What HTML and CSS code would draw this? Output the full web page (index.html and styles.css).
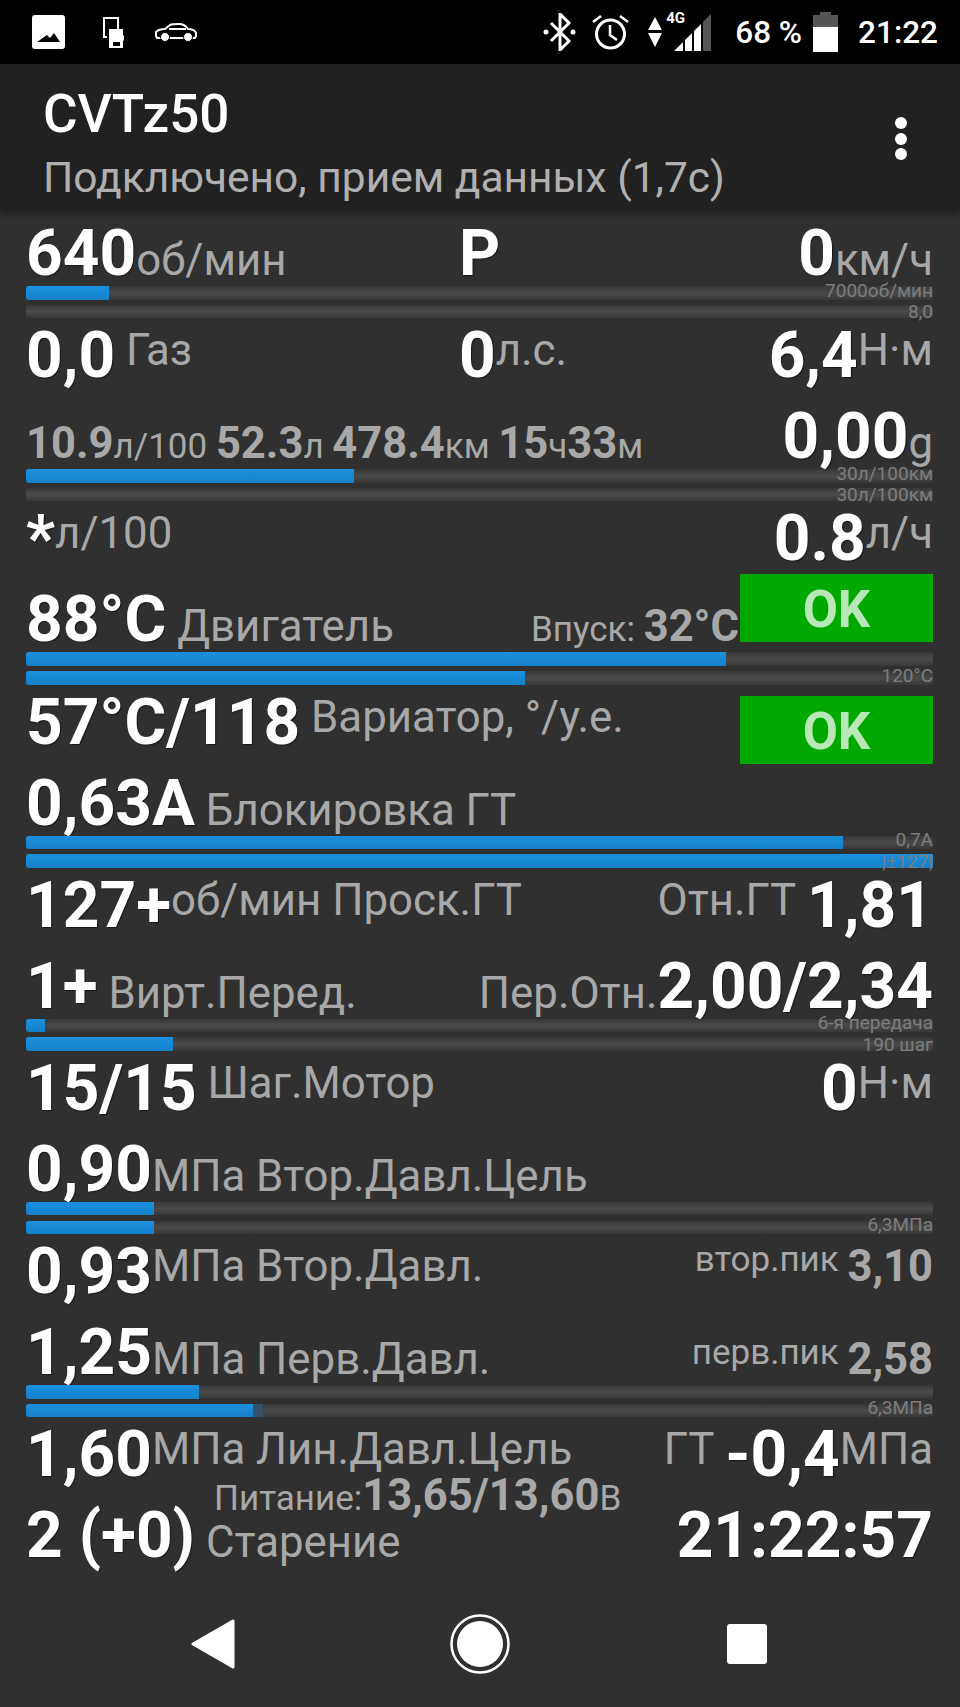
FILE: index.html
```html
<!DOCTYPE html>
<html lang="ru">
<head>
  <meta charset="UTF-8" />
  <title>CVTz50</title>
  <link rel="stylesheet" href="styles.css">
</head>
<body>

  <!-- status bar -->
  <div class="statusbar">
    <div class="status-left">
      <svg width="33" height="34" viewBox="0 0 33 34"><path fill="#fff" fill-rule="evenodd" d="M3 0h27a3 3 0 0 1 3 3v28a3 3 0 0 1-3 3H3a3 3 0 0 1-3-3V3a3 3 0 0 1 3-3zM5 27h23l-6-9-4 5-3-3z"/></svg>
      <svg width="22" height="32" viewBox="0 0 22 32"><path fill="none" stroke="#fff" stroke-width="2" d="M16 13V2H2v19h3"/><path fill="#fff" fill-rule="evenodd" d="M7 13h14v6l1 1v4l-1 1v7H7zM11 26v4h7v-4z"/></svg>
      <svg class="ic-car" width="42" height="19" viewBox="0 0 42 19"><path fill="none" stroke="#fff" stroke-width="2" d="M1 9c2-2 6-3 9-3l5-4c2-1 5-1 9-1 4 0 7 2 9 5 3 0 7 1 8 4v3l-1 2H2l-1-2zM14 6h17"/><circle cx="10" cy="14" r="4.500" fill="#fff" stroke="#000"/><circle cx="33" cy="14" r="4.500" fill="#fff" stroke="#000"/></svg>
    </div>
    <div class="status-right">
      <svg class="ic-bt" width="33" height="38" viewBox="0 0 33 38"><path fill="none" stroke="#fff" stroke-width="3" d="M8 10l18 18-9 9V1l9 9L8 28"/><circle cx="3" cy="19" r="2.500" fill="#fff"/><circle cx="30" cy="19" r="2.500" fill="#fff"/></svg>
      <svg class="ic-alarm" width="37" height="36" viewBox="0 0 37 36"><circle cx="18.500" cy="20" r="14" fill="none" stroke="#fff" stroke-width="3"/><path fill="none" stroke="#fff" stroke-width="2.500" d="M18 11v10l7 5M1 8l8-6M36 8l-8-6"/></svg>
      <svg class="ic-arrows" width="14" height="30" viewBox="0 0 14 30"><path fill="#fff" d="M7 0l7 13H0zM0 16h14L7 30z"/></svg>
      <div class="signal">
        <span class="net">4G</span>
        <svg width="37" height="37" viewBox="0 0 37 37"><path fill="#555" d="M29 8l8-8v37h-8z"/><path fill="#fff" d="M27 10v27h-7V17zM18 19v18h-7V26zM9 28v9H0z"/></svg>
      </div>
      <span class="batt-text">68 %</span>
      <div class="battery"><span class="batt-nib"></span><span class="batt-empty"></span><span class="batt-full"></span></div>
      <span class="clock">21:22</span>
    </div>
  </div>

  <!-- app bar -->
  <div class="appbar">
    <div>
      <div class="title">CVTz50</div>
      <div class="subtitle">Подключено, прием данных (1,7с)</div>
    </div>
    <div class="menu"><span></span><span></span><span></span></div>
  </div>

  <div class="content">

    <div class="row row3">
      <div><b>640</b><span class="l">об/мин</span></div>
      <div><b>P</b></div>
      <div><b>0</b><span class="l">км/ч</span></div>
    </div>
    <div class="bars">
      <div class="bar"><div class="fill" style="width:83px"></div><span class="max">7000об/мин</span></div>
      <div class="bar"><span class="max low">8,0</span></div>
    </div>

    <div class="row row3 gap">
      <div><b>0,0</b> <span class="l up">Газ</span></div>
      <div><b>0</b><span class="l up">л.с.</span></div>
      <div><b>6,4</b><span class="l up">Н·м</span></div>
    </div>

    <div class="row gap">
      <div class="stats"><b>10.9</b><span>л/100</span> <b>52.3</b><span>л</span> <b>478.4</b><span>км</span> <b>15</b><span>ч</span><b>33</b><span>м</span></div>
      <div><b>0,00</b><span class="l">g</span></div>
    </div>
    <div class="bars">
      <div class="bar"><div class="fill" style="width:328px"></div><span class="max">30л/100км</span></div>
      <div class="bar"><span class="max low">30л/100км</span></div>
    </div>

    <div class="row">
      <div><b>*</b><span class="l up">л/100</span></div>
      <div><b>0.8</b><span class="l up">л/ч</span></div>
    </div>

    <div class="row gap">
      <div><b>88°C</b> <span class="l">Двигатель</span></div>
      <div class="row-end">
        <div class="stats"><span>Впуск:</span> <b>32°C</b></div>
        <div class="ok ok-high">OK</div>
      </div>
    </div>
    <div class="bars">
      <div class="bar"><div class="fill" style="width:700px"></div></div>
      <div class="bar"><div class="fill" style="width:499px"></div><span class="max">120°C</span></div>
    </div>

    <div class="row">
      <div><b>57°C/118</b> <span class="l up">Вариатор, °/у.е.</span></div>
      <div class="ok ok-low">OK</div>
    </div>

    <div class="row gap">
      <div><b>0,63A</b> <span class="l">Блокировка ГТ</span></div>
    </div>
    <div class="bars">
      <div class="bar"><div class="fill" style="width:817px"></div><span class="max">0,7A</span></div>
      <div class="bar"><div class="fill" style="width:907px"></div><span class="max low">|±127|</span></div>
    </div>

    <div class="row">
      <div><b>127+</b><span class="l up">об/мин Проск.ГТ</span></div>
      <div><span class="l up">Отн.ГТ</span> <b>1,81</b></div>
    </div>

    <div class="row gap">
      <div><b>1+</b> <span class="l">Вирт.Перед.</span></div>
      <div><span class="l">Пер.Отн.</span><b>2,00/2,34</b></div>
    </div>
    <div class="bars">
      <div class="bar"><div class="fill" style="width:19px"></div><span class="max">6-я передача</span></div>
      <div class="bar"><div class="fill" style="width:147px"></div><span class="max low">190 шаг</span></div>
    </div>

    <div class="row">
      <div><b>15/15</b> <span class="l up">Шаг.Мотор</span></div>
      <div><b>0</b><span class="l up">Н·м</span></div>
    </div>

    <div class="row gap">
      <div><b>0,90</b><span class="l">МПа Втор.Давл.Цель</span></div>
    </div>
    <div class="bars">
      <div class="bar"><div class="fill" style="width:128px"></div></div>
      <div class="bar"><div class="fill" style="width:128px"></div><span class="max">6,3МПа</span></div>
    </div>

    <div class="row">
      <div><b>0,93</b><span class="l up">МПа Втор.Давл.</span></div>
      <div class="stats"><span class="peak-up-label">втор.пик</span> <b class="peak-up">3,10</b></div>
    </div>

    <div class="row gap">
      <div><b>1,25</b><span class="l">МПа Перв.Давл.</span></div>
      <div class="stats"><span class="peak-label">перв.пик</span> <b>2,58</b></div>
    </div>
    <div class="bars">
      <div class="bar"><div class="fill" style="width:173px"></div></div>
      <div class="bar"><div class="fill fill-ghost" style="width:227px"></div><span class="max">6,3МПа</span></div>
    </div>

    <div class="row">
      <div><b>1,60</b><span class="l up">МПа Лин.Давл.Цель</span></div>
      <div><span class="l up">ГТ</span> <b>-0,4</b><span class="l up">МПа</span></div>
    </div>

    <div class="row gap last">
      <div><b>2 (+0)</b> <span class="l">Старение</span></div>
      <div><b>21:22:57</b></div>
      <div class="stats power"><span>Питание:</span><b>13,65/13,60</b><span>В</span></div>
    </div>

  </div>

  <!-- nav bar -->
  <div class="navbar">
    <div class="nav-item"><svg width="44" height="50" viewBox="0 0 44 50"><path fill="#fff" stroke="#fff" stroke-width="3" stroke-linejoin="round" d="M42 2v46L2 25z"/></svg></div>
    <div class="nav-item"><svg width="60" height="60" viewBox="0 0 60 60"><circle cx="30" cy="30" r="28.500" fill="none" stroke="#fff" stroke-width="2.500"/><circle cx="30" cy="30" r="23" fill="#fff"/></svg></div>
    <div class="nav-item"><div class="nav-square"></div></div>
  </div>

</body>
</html>
```

FILE: styles.css
```css
* {
  box-sizing: border-box;
}

body {
  margin: 0;
  width: 960px;
  height: 1707px;
  overflow: hidden;
  background-color: #303030;
  color: #fff;
  font-family: Roboto, "Noto Sans", sans-serif;
}

/* status bar */
.statusbar {
  height: 64px;
  background: #000;
  display: flex;
  justify-content: space-between;
  align-items: center;
  padding: 0 22px 0 32px;
}

.status-left {
  display: flex;
  align-items: center;
  gap: 37px;
}

.ic-car {
  margin-left: -6px;
}

.status-right {
  display: flex;
  align-items: center;
}

.ic-bt {
  margin-right: 16px;
}

.ic-alarm {
  margin-right: 19px;
}

.ic-arrows {
  margin-right: 12px;
}

.signal {
  width: 37px;
  height: 37px;
  position: relative;
  margin-right: 24px;
}

.net {
  position: absolute;
  left: -8px;
  top: -5px;
  font-size: 15px;
  font-weight: 700;
}

.batt-text {
  font-size: 31.5px;
  font-weight: 500;
  margin-right: 11px;
}

.battery {
  width: 25px;
  height: 40px;
  display: flex;
  flex-direction: column;
  align-items: center;
  margin-right: 20px;
}

.batt-nib {
  width: 11px;
  height: 3px;
  background: #555;
}

.batt-empty {
  width: 100%;
  height: 12px;
  background: #555;
}

.batt-full {
  width: 100%;
  flex: 1;
  background: #fff;
}

.clock {
  font-size: 31.5px;
  font-weight: 500;
}

/* app bar */
.appbar {
  height: 148px;
  background: #212121;
  padding: 19px 53px 0 43px;
  display: flex;
  justify-content: space-between;
  box-shadow: 0 3px 8px rgba(0, 0, 0, 0.35);
  position: relative;
}

.title {
  font-size: 53px;
  font-weight: 500;
  line-height: 62px;
}

.subtitle {
  font-size: 42.5px;
  line-height: 50px;
  margin-top: 8px;
  color: #b0b0b0;
}

.menu {
  display: flex;
  flex-direction: column;
  gap: 3.5px;
  padding-top: 34px;
  width: 12px;
}

.menu span {
  width: 12px;
  height: 12px;
  border-radius: 50%;
  background: #fff;
}

/* gauges */
.content {
  padding: 4px 27px 0 26px;
  height: 1356px;
}

.row {
  height: 70px;
  padding-top: 3px;
  display: flex;
  justify-content: space-between;
  align-items: baseline;
  font-size: 43.8px;
  line-height: 70px;
  white-space: nowrap;
}

.row3 {
  display: grid;
  grid-template-columns: 433px 1fr auto;
}

.gap,
.row + .row {
  margin-top: 11px;
}

.bars + .row {
  margin-top: 0;
}

b {
  font-size: 64px;
  font-weight: 700;
  text-shadow: 1px 1px 1px rgba(0, 0, 0, 0.5);
}

.l {
  color: #a8a8a8;
  line-height: 1;
}

.l.up {
  vertical-align: 12px;
}

.stats {
  color: #a8a8a8;
  font-size: 35px;
}

.stats b {
  font-size: 43.5px;
  color: #a8a8a8;
  text-shadow: none;
}

.stats span {
  line-height: 1;
}

.stats .peak-up {
  line-height: 1;
  vertical-align: 12px;
}

.peak-up-label {
  vertical-align: 22px;
}

.peak-label {
  vertical-align: 10px;
}

.row-end {
  display: flex;
  align-items: baseline;
}

.ok {
  width: 193px;
  height: 68px;
  align-self: flex-start;
  background: #00a800;
  color: #b8e8b8;
  font-size: 51px;
  font-weight: 700;
  line-height: 72px;
  text-align: center;
}

.ok-high {
  margin-top: -18px;
  margin-left: 1px;
}

.ok-low {
  margin-top: 8px;
}

.bars {
  height: 32.2px;
  display: flex;
  flex-direction: column;
  gap: 5.2px;
}

.bar {
  position: relative;
  height: 13.5px;
  border-radius: 3px;
  background: linear-gradient(#383838, #4a4a4a 50%, #383838);
}

.fill {
  height: 100%;
  border-radius: 3px 0 0 3px;
  background: linear-gradient(#1a90e0, #1580c8);
}

.fill-ghost {
  box-shadow: 10px 0 0 #34516a;
}

.max {
  position: absolute;
  right: 0;
  bottom: 0;
  font-size: 19px;
  line-height: 19px;
  color: #7d7d7d;
}

.low {
  bottom: -3px;
}

.last {
  position: relative;
}

.power {
  position: absolute;
  left: 188px;
  top: -37px;
}

/* nav bar */
.navbar {
  height: 139px;
  display: flex;
  justify-content: center;
  align-items: center;
  padding-top: 12px;
}

.nav-item {
  width: 267px;
  display: flex;
  justify-content: center;
}

.nav-square {
  width: 40px;
  height: 40px;
  background: #fff;
  border-radius: 3px;
}
```
